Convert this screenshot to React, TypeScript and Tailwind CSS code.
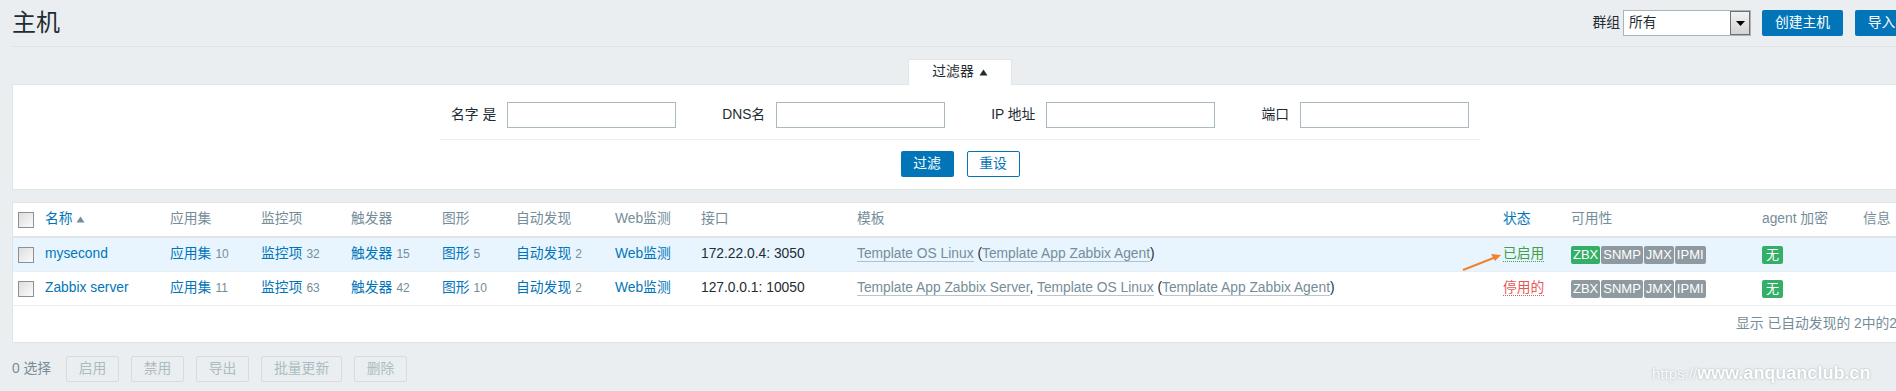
const cols =
  "grid grid-cols-[32px_125px_91px_90px_91px_74px_99px_86px_156px_646px_68px_191px_101px_1fr] items-center";

function Checkbox() {
  return (
    <span className="ml-[5px] block h-[16px] w-[16px] border border-[#8f8f8f] bg-gradient-to-br from-[#dedede] to-[#fbfbfb]" />
  );
}

function SortArrow() {
  return (
    <svg width="9" height="7" viewBox="0 0 9 7" className="ml-[3px] inline-block">
      <path d="M4.5 0.5 L8.5 6.5 L0.5 6.5 Z" fill="currentColor" />
    </svg>
  );
}

function CountLink({ label, count }: { label: string; count?: number }) {
  return (
    <span className="whitespace-nowrap">
      <span className="text-[#0275b8]">{label}</span>
      {count !== undefined && <span className="ml-[4px] text-[12px] text-[#768d99]">{count}</span>}
    </span>
  );
}

function Tpl({ children }: { children: React.ReactNode }) {
  return <span className="border-b border-[#768d99]/50 text-[#768d99]">{children}</span>;
}

function Avail({ zbxOn }: { zbxOn: boolean }) {
  const items = ["ZBX", "SNMP", "JMX", "IPMI"];
  return (
    <div className="flex gap-[1px]">
      {items.map((t, i) => (
        <span
          key={t}
          className={
            "flex h-[18px] items-center rounded-[2px] px-[2px] text-[13px] leading-none text-white " +
            (i === 0 && zbxOn ? "bg-[#34af67]" : "bg-[#8e9a9f]")
          }
        >
          {t}
        </span>
      ))}
    </div>
  );
}

function NoneBadge() {
  return (
    <span className="flex h-[18px] w-[21px] items-center justify-center rounded-[2px] bg-[#34af67] text-[13px] leading-none text-white">
      无
    </span>
  );
}

function HostRow({
  name,
  apps,
  items,
  triggers,
  graphs,
  disc,
  iface,
  templates,
  enabled,
  highlight,
}: {
  name: string;
  apps: number;
  items: number;
  triggers: number;
  graphs: number;
  disc: number;
  iface: string;
  templates: React.ReactNode;
  enabled: boolean;
  highlight?: boolean;
}) {
  return (
    <div className={cols + " h-[34px] border-b border-[#ebeef0] " + (highlight ? "bg-[#e8f5ff]" : "bg-white")}>
      <Checkbox />
      <span className="text-[#0275b8]">{name}</span>
      <CountLink label="应用集" count={apps} />
      <CountLink label="监控项" count={items} />
      <CountLink label="触发器" count={triggers} />
      <CountLink label="图形" count={graphs} />
      <CountLink label="自动发现" count={disc} />
      <CountLink label="Web监测" />
      <span>{iface}</span>
      <span className="whitespace-nowrap">{templates}</span>
      <span>
        {enabled ? (
          <span className="border-b border-dotted border-[#429e47] text-[#429e47]">已启用</span>
        ) : (
          <span className="border-b border-dotted border-[#e45959] text-[#e45959]">停用的</span>
        )}
      </span>
      <Avail zbxOn={enabled} />
      <NoneBadge />
      <span />
    </div>
  );
}

export default function App() {
  return (
    <div className="relative h-[391px] w-[1896px] overflow-hidden bg-[#ebeef0] font-['Liberation_Sans','Noto_Sans_CJK_SC',sans-serif] text-[13.8px] text-[#1f2c33]">
      <div className="w-[1920px] px-[12px]">
        {/* Header */}
        <header className="box-border flex h-[47px] items-center justify-between border-b border-[#dde2e5]">
          <h1 className="text-[24px] leading-none">主机</h1>
          <div className="flex items-center">
            <span className="mr-[3px]">群组</span>
            <div className="flex h-[26px] w-[128px] items-stretch border border-[#a9b5bc] bg-white">
              <span className="flex flex-1 items-center pl-[5px]">所有</span>
              <span className="flex w-[20px] items-center justify-center border border-[#707070] bg-gradient-to-b from-[#f2f2f2] to-[#d4d4d4]">
                <svg width="9" height="5" viewBox="0 0 9 5">
                  <path d="M0 0 H9 L4.5 5 Z" fill="#000" />
                </svg>
              </span>
            </div>
            <button className="ml-[11px] h-[26px] w-[81px] rounded-[2px] bg-[#0275b8] text-white">创建主机</button>
            <button className="ml-[12px] h-[26px] w-[53px] rounded-[2px] bg-[#0275b8] text-white">导入</button>
          </div>
        </header>

        {/* Filter */}
        <div className="mt-[12px] flex justify-center">
          <div className="relative z-10 -mb-px flex h-[26px] w-[104px] items-center justify-center rounded-t-[2px] border border-b-0 border-[#dfe4e7] bg-white">
            过滤器
            <svg width="9" height="7" viewBox="0 0 9 7" className="ml-[5px]">
              <path d="M4.5 0.5 L8.5 6.5 L0.5 6.5 Z" fill="#1f2c33" />
            </svg>
          </div>
        </div>
        <div className="border border-[#dfe4e7] bg-white pb-[12px] pt-[17px]">
          <div className="mx-auto w-[1040px] border-b border-[#ebeef0] pb-[11px]">
            <div className="flex items-center justify-center gap-[46px]">
              {["名字 是", "DNS名", "IP 地址", "端口"].map((l) => (
                <div key={l} className="flex items-center">
                  <span className="mr-[11px] whitespace-nowrap">{l}</span>
                  <span className="block h-[26px] w-[169px] border border-[#aab8bf] bg-white" />
                </div>
              ))}
            </div>
          </div>
          <div className="mt-[11px] flex justify-center gap-[13px]">
            <button className="h-[26px] w-[53px] rounded-[2px] bg-[#0275b8] text-white">过滤</button>
            <button className="h-[26px] w-[53px] rounded-[2px] border border-[#0275b8] bg-white text-[#0275b8]">重设</button>
          </div>
        </div>

        {/* Table */}
        <div className="mt-[12px] border border-[#dfe4e7] bg-white">
          <div className={cols + " h-[35px] border-b-2 border-[#dfe4e7] text-[#768d99]"}>
            <Checkbox />
            <span className="flex items-center text-[#0275b8]">
              名称
              <span className="text-[#768d99]">
                <SortArrow />
              </span>
            </span>
            <span>应用集</span>
            <span>监控项</span>
            <span>触发器</span>
            <span>图形</span>
            <span>自动发现</span>
            <span>Web监测</span>
            <span>接口</span>
            <span>模板</span>
            <span className="text-[#0275b8]">状态</span>
            <span>可用性</span>
            <span className="whitespace-nowrap">agent 加密</span>
            <span>信息</span>
          </div>
          <HostRow
            highlight
            name="mysecond"
            apps={10}
            items={32}
            triggers={15}
            graphs={5}
            disc={2}
            iface="172.22.0.4: 3050"
            enabled
            templates={
              <>
                <Tpl>Template OS Linux</Tpl> (<Tpl>Template App Zabbix Agent</Tpl>)
              </>
            }
          />
          <HostRow
            name="Zabbix server"
            apps={11}
            items={63}
            triggers={42}
            graphs={10}
            disc={2}
            iface="127.0.0.1: 10050"
            enabled={false}
            templates={
              <>
                <Tpl>Template App Zabbix Server</Tpl>, <Tpl>Template OS Linux</Tpl> (<Tpl>Template App Zabbix Agent</Tpl>)
              </>
            }
          />
          <div className="flex h-[36px] items-center justify-end pr-[10px] text-[#768d99]">
            显示 已自动发现的 2中的2
          </div>
        </div>

        {/* Actions */}
        <div className="mt-[13px] flex items-center">
          <span className="mr-[15px] text-[#768d99]">0 选择</span>
          <div className="flex gap-[12px]">
            {["启用", "禁用", "导出", "批量更新", "删除"].map((b) => (
              <button
                key={b}
                className={
                  "h-[26px] rounded-[2px] border border-[#d5dce0] text-[#acbbc2] " +
                  (b === "批量更新" ? "w-[81px]" : "w-[53px]")
                }
              >
                {b}
              </button>
            ))}
          </div>
        </div>
      </div>

      {/* Annotation arrow */}
      <svg className="absolute left-[1460px] top-[250px]" width="44" height="24" viewBox="0 0 44 24">
        <line x1="3" y1="20" x2="36" y2="7" stroke="#f0832b" strokeWidth="2" />
        <path d="M41 5 L31 4 L35 11 Z" fill="#f0832b" />
      </svg>

      {/* Watermark */}
      <div className="absolute left-[1652px] top-[360px] whitespace-nowrap text-[18px] text-white [text-shadow:0_0_2px_#8fa0a8]">
        <span className="text-[15px] opacity-80">https://</span>
        <span className="font-bold">www.anquanclub.cn</span>
      </div>
    </div>
  );
}
